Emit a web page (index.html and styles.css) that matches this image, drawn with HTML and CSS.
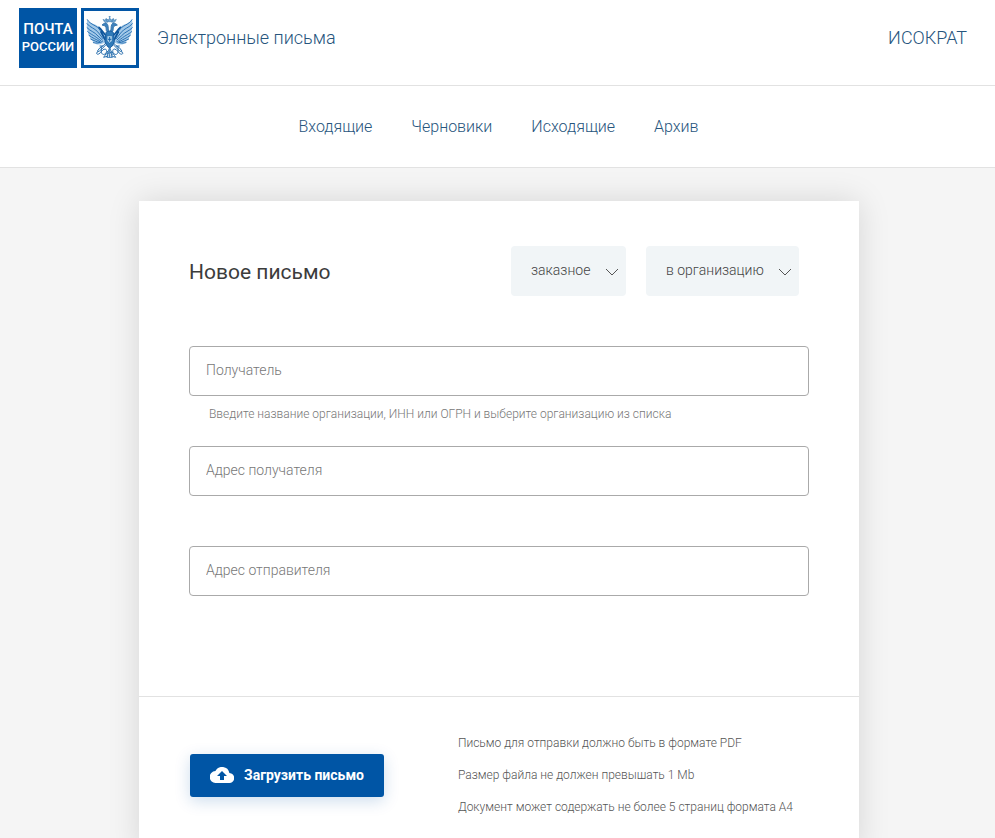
FILE: index.html
```html
<!DOCTYPE html>
<html lang="ru">
<head>
<meta charset="utf-8">
<meta name="viewport" content="width=device-width, initial-scale=1">
<title>Электронные письма</title>
<link rel="stylesheet" href="styles.css">
</head>
<body>
<header class="topbar">
  <a class="brand" href="#">
    <span class="brand-name"><span class="brand-top">ПОЧТА</span><span>РОССИИ</span></span>
    <svg class="emblem" viewBox="0 0 174 180" aria-hidden="true">
      <path d="M0 0H174V180H0Z" fill="#0055a5"/>
      <path d="M9 9H165V171H9Z" fill="#fdfefe"/>
      <defs>
        <g id="wing" fill="none" stroke-linecap="round" stroke-linejoin="round">
          <path d="M19 35C27 48 46 47 57 59C67 70 68 83 78 84L80 101C67 103 60 112 46 109C32 101 23 84 20 70C18 56 16 47 19 35Z" fill="#a3c9e8"/>
          <g stroke="#2a72b4" stroke-width="3">
            <path d="M19 35C29 52 49 51 58 68L70 87"/>
            <path d="M18 47C27 60 43 60 53 75L66 92"/>
            <path d="M18 59C28 70 40 71 51 84L64 96"/>
            <path d="M20 71C30 80 41 82 60 99"/>
            <path d="M24 82C36 91 44 93 57 101"/>
            <path d="M29 93C39 98 46 101 57 104"/>
            <path d="M37 104C46 107 55 105 64 101"/>
          </g>
          <path d="M54 58C65 67 66 77 78 84M60 72L72 95" stroke="#0d559c" stroke-width="5"/>
          <path d="M84 70C80 64 83 57 80 50L75 44L68 47L63 51L70 53L75 57L76 68L83 77" fill="#3d81bd" stroke="#3978ae" stroke-width="3"/>
          <path d="M70 41L66 34L72 37L75 32L78 38L83 35L80 42Z" fill="#6aa2d1" stroke="#5189b7" stroke-width="2"/>
          <path d="M78 101L67 113L57 119L50 128M66 114L57 114M61 118L61 126M74 111C66 119 58 130 49 132M49 132C44 134 47 141 53 138C62 134 62 124 72 123C80 124 77 137 70 139C64 141 59 134 61 128M80 130L72 142L68 148L78 145L84 132" stroke="#286fae" stroke-width="3"/>
        </g>
      </defs>
      <use href="#wing"/>
      <use href="#wing" transform="matrix(-1 0 0 1 172 0)"/>
      <path d="M75 74C79 68 93 68 97 74L100 101C97 112 91 117 86 121C80 116 75 111 72 101Z" fill="#307bb9" stroke="#175ca0" stroke-width="3"/>
      <path d="M78 83H94V99L86 106L78 99Z" fill="#abd0e9" stroke="#1c65a8" stroke-width="2"/>
      <path d="M86 87V101M81 94H91" stroke="#1765ad" stroke-width="3"/>
      <path d="M78 41L76 32L83 37L86 29L90 37L97 32L94 41ZM86 24V30M83 26H89" fill="#77abd5" stroke="#3f7eb4" stroke-width="2"/>
      <path d="M86 118L78 141M86 118V145M86 118L94 141M77 148H95M79 148L81 142M86 148V142M93 148L91 142" fill="none" stroke="#397cb7" stroke-width="3"/>
    </svg>
    <span class="service">Электронные письма</span>
  </a>
  <a class="account" href="#">ИСОКРАТ</a>
</header>
<nav class="tabs">
  <a href="#">Входящие</a>
  <a href="#">Черновики</a>
  <a href="#">Исходящие</a>
  <a href="#">Архив</a>
</nav>
<main class="page">
  <form class="card">
    <div class="compose">
      <div class="heading">
        <h1>Новое письмо</h1>
        <div class="options">
          <div class="picker">
            <select aria-label="заказное"><option>заказное</option></select>
            <svg viewBox="0 0 14 8" aria-hidden="true"><path d="M1 1L7 7L13 1"/></svg>
          </div>
          <div class="picker">
            <select aria-label="в организацию"><option>в организацию</option></select>
            <svg viewBox="0 0 14 8" aria-hidden="true"><path d="M1 1L7 7L13 1"/></svg>
          </div>
        </div>
      </div>
      <div class="field">
        <input type="text" aria-label="Получатель" aria-describedby="hint" placeholder="Получатель">
        <p class="hint" id="hint">Введите название организации, ИНН или ОГРН и выберите организацию из списка</p>
      </div>
      <div class="field">
        <input type="text" aria-label="Адрес получателя" placeholder="Адрес получателя">
      </div>
      <div class="field">
        <input type="text" aria-label="Адрес отправителя" placeholder="Адрес отправителя">
      </div>
    </div>
    <div class="upload">
      <button class="upload-button" type="button">
        <svg viewBox="0 0 24 16" aria-hidden="true"><path fill-rule="evenodd" d="M19.4 6A7.5 7.5 0 0 0 5.4 4A6 6 0 0 0 6 16H19A5 5 0 0 0 19.4 6ZM14 9V13H10V9H7L12 4L17 9Z"/></svg>
        Загрузить письмо
      </button>
      <ul class="rules">
        <li>Письмо для отправки должно быть в формате PDF</li>
        <li>Размер файла не должен превышать 1 Mb</li>
        <li>Документ может содержать не более 5 страниц формата A4</li>
      </ul>
    </div>
  </form>
</main>
</body>
</html>
```
FILE: styles.css
```css
* {
  box-sizing: border-box;
}

body {
  margin: 0;
  min-height: 100vh;
  display: flex;
  flex-direction: column;
  background: #f5f5f5;
  color: #333;
  font-family: Roboto, "Liberation Sans", sans-serif;
  font-weight: 300;
}

a {
  color: #27557d;
  text-decoration: none;
}

.topbar {
  display: flex;
  justify-content: space-between;
  align-items: flex-start;
  padding: 8px 28px 17px 19px;
  background: #fff;
  border-bottom: 1px solid #e2e2e2;
  font-size: 18px;
  line-height: 60px;
}

.brand {
  display: flex;
}

.brand-name {
  display: flex;
  flex-direction: column;
  align-items: center;
  justify-content: center;
  width: 58px;
  height: 60px;
  background: #0055a5;
  color: #fff;
  font-size: 13px;
  font-weight: 500;
  line-height: 18px;
}

.brand-top {
  font-size: 15px;
}

.emblem {
  width: 58px;
  height: 60px;
  margin: 0 18px 0 4px;
}

.tabs {
  display: flex;
  justify-content: center;
  gap: 39px;
  padding: 31px 0 30px 2px;
  background: #fff;
  border-bottom: 1px solid #e2e2e2;
  font-size: 16px;
  line-height: 20px;
}

.page {
  flex: 1;
  display: flex;
  justify-content: center;
  padding: 33px 0 0 3px;
}

.card {
  width: 100%;
  max-width: 720px;
  background: #fff;
  box-shadow: 0 0 30px rgba(0, 0, 0, 0.13);
}

.compose {
  padding: 45px 50px 50px;
}

.heading {
  display: flex;
  justify-content: space-between;
  align-items: flex-end;
  margin-bottom: 50px;
  padding-right: 10px;
}

h1 {
  margin: 0;
  color: #3c3c3c;
  font-size: 21px;
  font-weight: 400;
  line-height: 48px;
}

.options {
  display: flex;
  gap: 20px;
}

.picker {
  position: relative;
}

.picker select {
  height: 50px;
  padding: 0 35px 2px 20px;
  border: 0;
  border-radius: 4px;
  appearance: none;
  background: #f1f5f7;
  color: #444;
  font: inherit;
  font-size: 14px;
}

.picker svg {
  position: absolute;
  right: 7px;
  top: 22px;
  width: 14px;
  height: 8px;
  fill: none;
  stroke: #555;
  pointer-events: none;
}

.field {
  min-height: 100px;
}

.field input {
  display: block;
  width: 100%;
  height: 50px;
  padding: 0 16px 2px;
  border: 1px solid #aaa;
  border-radius: 4px;
  background: #fff;
  color: #333;
  font: inherit;
  font-size: 14px;
}

.field input::placeholder {
  color: #777;
  opacity: 1;
}

.hint {
  margin: 8px 0 0;
  padding-left: 20px;
  color: #777;
  font-size: 12px;
  line-height: 20px;
}

.upload {
  display: flex;
  align-items: flex-start;
  gap: 74px;
  padding: 30px 50px 30px 51px;
  border-top: 1px solid #e2e2e2;
}

.upload-button {
  display: flex;
  align-items: center;
  gap: 10px;
  height: 43px;
  margin-top: 27px;
  padding: 0 20px 2px;
  border: 0;
  border-radius: 3px;
  background: #0055a5;
  box-shadow: 0 4px 16px rgba(0, 85, 165, 0.2);
  color: #fff;
  font: inherit;
  font-size: 14px;
  font-weight: 700;
  white-space: nowrap;
}

.upload-button svg {
  width: 24px;
  height: 16px;
  fill: #fff;
}

.rules {
  margin: 0;
  padding: 0;
  list-style: none;
  color: #555;
  font-size: 12px;
  line-height: 32px;
}
```
